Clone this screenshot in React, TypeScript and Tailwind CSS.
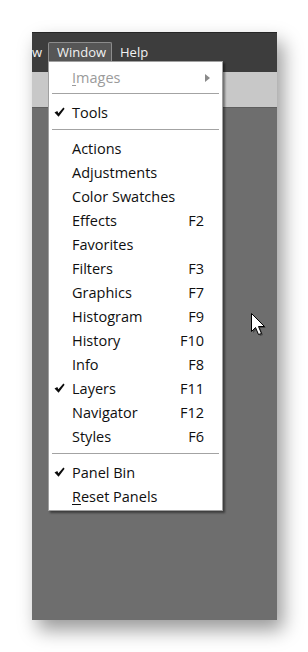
import React from "react";

type Item = { label: string; key?: string; check?: boolean; underline?: number };

const groupA: Item[] = [
  { label: "Actions" },
  { label: "Adjustments" },
  { label: "Color Swatches" },
  { label: "Effects", key: "F2" },
  { label: "Favorites" },
  { label: "Filters", key: "F3" },
  { label: "Graphics", key: "F7" },
  { label: "Histogram", key: "F9" },
  { label: "History", key: "F10" },
  { label: "Info", key: "F8" },
  { label: "Layers", key: "F11", check: true },
  { label: "Navigator", key: "F12" },
  { label: "Styles", key: "F6" },
];

function Check() {
  return (
    <svg width="11" height="11" viewBox="0 0 11 11" className="absolute left-[5px] top-[6px]">
      <path d="M0.5 5.6 L3.3 4 L4.4 6.2 L9.4 0.5 L10.6 1.7 L4.6 9.8 Z" fill="#0c0c0c" />
    </svg>
  );
}

function Row({ item }: { item: Item }) {
  return (
    <div className="relative h-[24px] flex items-center pl-[23px] pr-[18px] pb-[1px] text-[#0f0f0f]">
      {item.check && <Check />}
      <span className="flex-1">
        {item.underline !== undefined ? (
          <>
            <span className="underline underline-offset-2">{item.label[0]}</span>
            {item.label.slice(1)}
          </>
        ) : (
          item.label
        )}
      </span>
      {item.key && <span>{item.key}</span>}
    </div>
  );
}

function Sep({ top }: { top: number }) {
  return (
    <div className={top === 3 ? "h-[11px] pt-[3px] px-[3px]" : "h-[12px] pt-[4px] px-[3px]"}>
      <div className="h-px bg-[#a3a3a3]" />
    </div>
  );
}

export default function App() {
  return (
    <div
      className="w-[308px] h-[652px] bg-white pt-[32px] pl-[32px] overflow-hidden"
      style={{ fontFamily: '"Open Sans", "Noto Sans", sans-serif' }}
    >
      <div className="relative w-[245px] h-[588px] flex flex-col shadow-[6px_10px_18px_rgba(0,0,0,0.4)]">
        {/* menubar */}
        <div className="h-[40px] bg-[#3d3d3d] border-t border-[#262626] flex items-start pt-[9px] text-[13px] text-[#f2f2f2]">
          <div className="h-[20px] leading-[20px] w-[16px] overflow-hidden">w</div>
          <div className="h-[21px] leading-[19px] px-[8px] border border-b-0 border-[#8c8c8c] rounded-t-[2px] bg-[#565656] w-[64px]">
            Window
          </div>
          <div className="h-[20px] leading-[20px] pl-[8px]">Help</div>
        </div>
        <div className="h-[36px] bg-[#c8c8c8] border-b border-[#5e5e5e]" />
        <div className="flex-1 bg-[#6e6e6e]" />

        {/* dropdown menu */}
        <div className="absolute left-[16px] top-[29px] w-[175px] h-[450px] bg-white border border-[#a0a0a0] shadow-[2px_2px_2px_rgba(0,0,0,0.45)] pt-[4px] text-[14.5px]">
          <div className="relative h-[24px] flex items-center pl-[23px] pr-[12px] pb-[1px] text-[#9b9b9b]">
            <span className="flex-1">
              <span className="underline underline-offset-2">I</span>mages
            </span>
            <svg width="5" height="8" viewBox="0 0 5 8">
              <path d="M0 0 L5 4 L0 8 Z" fill="#8a8a8a" />
            </svg>
          </div>
          <Sep top={3} />
          <Row item={{ label: "Tools", check: true }} />
          <Sep top={4} />
          {groupA.map((it) => (
            <Row key={it.label} item={it} />
          ))}
          <Sep top={4} />
          <Row item={{ label: "Panel Bin", check: true }} />
          <Row item={{ label: "Reset Panels", underline: 0 }} />
        </div>

        {/* cursor */}
        <svg
          className="absolute left-[219px] top-[281px]"
          width="18"
          height="26"
          viewBox="0 0 18 26"
        >
          <path
            d="M2 2 L2 20 L6 16 L9 23 L12 22 L9 15 L15 15 Z"
            fill="rgba(0,0,0,0.35)"
          />
          <path
            d="M0.5 0.5 L0.5 18.5 L4.5 14.5 L7.5 21.5 L10.5 20.5 L7.5 13.5 L13.5 13.5 Z"
            fill="#fff"
            stroke="#000"
            strokeWidth="1"
          />
        </svg>
      </div>
    </div>
  );
}
